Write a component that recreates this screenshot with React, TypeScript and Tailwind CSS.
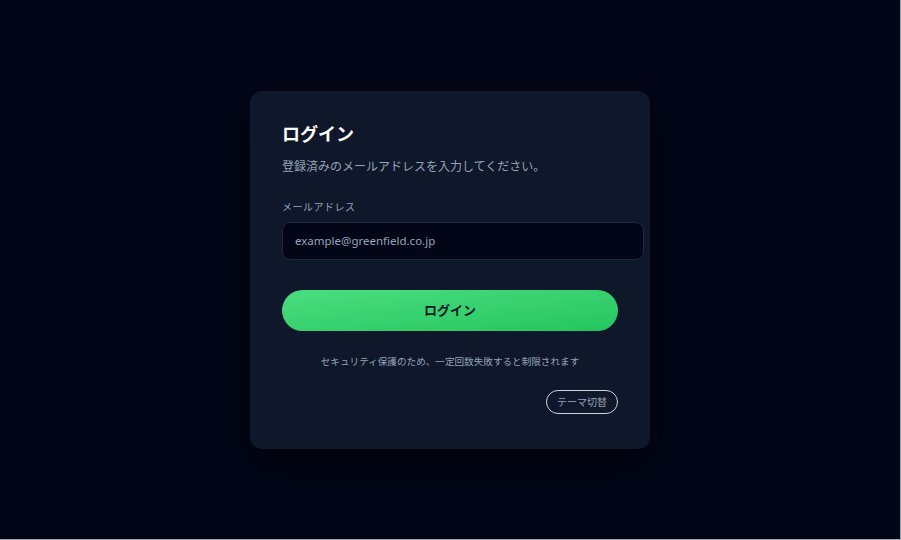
export default function App() {
  return (
    <div
      className="flex h-[540px] w-full items-center justify-center border-r border-b border-[#9ca3af] bg-[#020617]"
      style={{ fontFamily: '"Noto Sans CJK JP", "Noto Sans", sans-serif' }}
    >
      <div className="w-[400px] rounded-xl bg-[#0f172a] px-8 pt-[28px] pb-[35px] shadow-[0_16px_40px_rgba(0,0,0,0.55)]">
        <h1 className="text-[18px] leading-[28px] font-bold text-white">ログイン</h1>
        <p className="mt-[9px] text-[12px] leading-[20px] text-[#94a3b8]">
          登録済みのメールアドレスを入力してください。
        </p>

        <label className="mt-[23px] block text-[10px] leading-[16px] tracking-[0.05em] text-[#94a3b8]">
          メールアドレス
        </label>
        <input
          type="email"
          placeholder="example@greenfield.co.jp"
          className="mt-[7px] box-content block h-[20px] w-full rounded-lg border border-[#1e293b] bg-[#020617] px-3 py-[8px] text-[11.5px] text-[#e2e8f0] outline-none placeholder:text-[#94a3b8]"
          style={{ fontFamily: '"Noto Sans", sans-serif' }}
        />

        <button
          type="button"
          className="mt-[30px] flex h-[41px] w-full items-center justify-center rounded-full bg-gradient-to-br from-[#4ade80] to-[#22c55e] text-[13px] font-bold text-[#0f172a]"
        >
          ログイン
        </button>

        <p className="mt-[22px] text-center text-[9.6px] leading-[16px] text-[#94a3b8]">
          セキュリティ保護のため、一定回数失敗すると制限されます
        </p>

        <div className="mt-[21px] flex justify-end">
          <button
            type="button"
            className="h-[24px] w-[72px] rounded-full border border-[#cbd5e1] text-[10px] text-[#94a3b8]"
          >
            テーマ切替
          </button>
        </div>
      </div>
    </div>
  );
}
